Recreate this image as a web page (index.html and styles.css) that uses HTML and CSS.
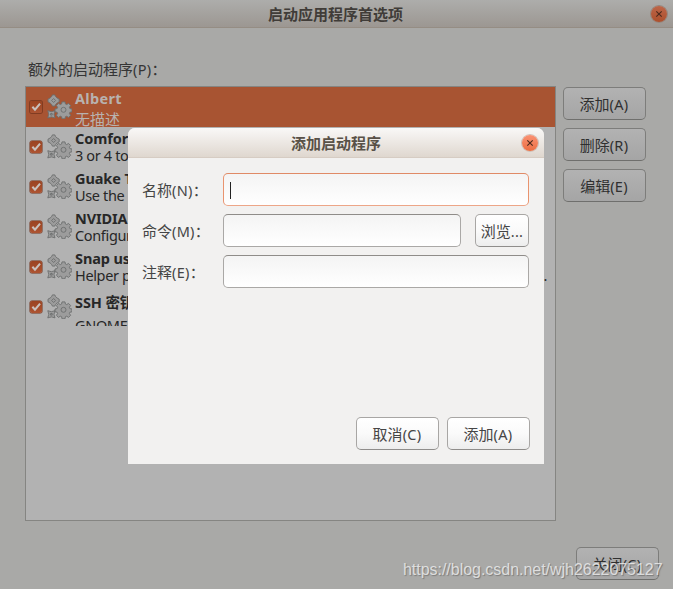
FILE: index.html
```html
<!DOCTYPE html>
<html lang="zh-CN">
<head>
<meta charset="utf-8">
<title>启动应用程序首选项</title>
<link rel="stylesheet" href="styles.css">
</head>
<body>
<svg class="defs" width="0" height="0" aria-hidden="true">
  <defs>
    <g id="gears">
      <g transform="translate(6.6 6.5)">
        <path d="M-1.2 -5.6h2.4l.7 1.6 1.6 1.5 2.1 1.2v2.6l-2.1 1.2-1.6 1.5-.7 1.6h-2.4l-.7-1.6-1.6-1.5-2.1-1.2v-2.6l2.1-1.2 1.6-1.5z"/>
        <path class="hole" d="M0 -2L2 0 0 2-2 0z"/>
      </g>
      <g transform="translate(4.4 20.3)">
        <path d="M-3.6 -3.6l2.1 .6 1.5 .4 1.5-.4 2.1-.6-.6 2.1-.4 1.5.4 1.5.6 2.1-2.1-.6L0 2.6l-1.5.4-2.1.6.6-2.1.4-1.5-.4-1.5z"/>
        <path class="hole" d="M-.8 -.8h1.6v1.6h-1.6z"/>
      </g>
      <g transform="translate(16.5 15.4)">
        <path d="M-1.5 -7.5h3l.4 2.1 1.3.6 1.8-1.2 2.1 2.1-1.2 1.8.5 1.3 2.1.4v2.8l-2.1.4-.5 1.3 1.2 1.8-2.1 2.1-1.8-1.2-1.3.5-.4 2.1h-3l-.4-2.1-1.3-.5-1.8 1.2-2.1-2.1 1.2-1.8-.5-1.3-2.1-.4v-2.8l2.1-.4.5-1.3-1.2-1.8 2.1-2.1 1.8 1.2 1.3-.6z"/>
        <circle class="hole" cx="0" cy=".4" r="2.5"/>
      </g>
    </g>
    <path id="tick" d="M2.6 6.2L5.4 9.4 10.9 2.8"/>
  </defs>
</svg>
<div class="window">
  <header class="titlebar">
    <h1>启动应用程序首选项</h1>
    <span class="close"><svg viewBox="0 0 8 8"><path d="M1.3 1.3l5.4 5.4M6.7 1.3L1.3 6.7"/></svg></span>
  </header>
  <main class="content">
    <p class="heading">额外的启动程序<span class="lat">(P)</span>：</p>
    <div class="columns">
      <ul class="list">
        <li class="row selected">
          <span class="check"><svg viewBox="0 0 13 13"><use href="#tick"/></svg></span>
          <svg class="gears" viewBox="0 0 25 25"><use href="#gears"/></svg>
          <div class="texts"><b>Albert</b><span>无描述</span></div>
        </li>
        <li class="row">
          <span class="check"><svg viewBox="0 0 13 13"><use href="#tick"/></svg></span>
          <svg class="gears" viewBox="0 0 25 25"><use href="#gears"/></svg>
          <div class="texts"><b>Comfor</b><span>3 or 4 to</span></div>
        </li>
        <li class="row">
          <span class="check"><svg viewBox="0 0 13 13"><use href="#tick"/></svg></span>
          <svg class="gears" viewBox="0 0 25 25"><use href="#gears"/></svg>
          <div class="texts"><b>Guake T</b><span>Use the</span></div>
        </li>
        <li class="row">
          <span class="check"><svg viewBox="0 0 13 13"><use href="#tick"/></svg></span>
          <svg class="gears" viewBox="0 0 25 25"><use href="#gears"/></svg>
          <div class="texts"><b>NVIDIA</b><span>Configur</span></div>
        </li>
        <li class="row">
          <span class="check"><svg viewBox="0 0 13 13"><use href="#tick"/></svg></span>
          <svg class="gears" viewBox="0 0 25 25"><use href="#gears"/></svg>
          <div class="texts"><b>Snap us</b><span class="spread"><span>Helper p</span><span>.</span></span></div>
        </li>
        <li class="row last">
          <span class="check"><svg viewBox="0 0 13 13"><use href="#tick"/></svg></span>
          <svg class="gears" viewBox="0 0 25 25"><use href="#gears"/></svg>
          <div class="texts"><b>SSH 密钥</b><span>GNOME</span></div>
        </li>
      </ul>
      <div class="actions">
        <button class="btn dim">添加<span class="lat">(A)</span></button>
        <button class="btn dim">删除<span class="lat">(R)</span></button>
        <button class="btn dim">编辑<span class="lat">(E)</span></button>
      </div>
    </div>
    <footer class="footer"><button class="btn dim">关闭<span class="lat">(C)</span></button></footer>
  </main>
</div>

<section class="dialog">
  <header class="titlebar light">
    <h2>添加启动程序</h2>
    <span class="close bright"><svg viewBox="0 0 8 8"><path d="M1.3 1.3l5.4 5.4M6.7 1.3L1.3 6.7"/></svg></span>
  </header>
  <div class="form">
    <div class="field"><label>名称<span class="lat">(N)</span>：</label><div class="entry focused"><i class="caret"></i></div></div>
    <div class="field"><label>命令<span class="lat">(M)</span>：</label><div class="entry"></div><button class="btn browse">浏览<span class="lat">...</span></button></div>
    <div class="field"><label>注释<span class="lat">(E)</span>：</label><div class="entry"></div></div>
  </div>
  <div class="buttons">
    <button class="btn">取消<span class="lat">(C)</span></button>
    <button class="btn">添加<span class="lat">(A)</span></button>
  </div>
</section>
<div class="watermark">https://blog.csdn.net/wjh2622075127</div>
</body>
</html>
```
FILE: styles.css
```css
* { box-sizing: border-box; }
body {
  margin: 0;
  width: 673px;
  height: 589px;
  overflow: hidden;
  position: relative;
  background: #a9a9a7;
  color: #353535;
  font: 15px/20px "Noto Sans", "Noto Sans CJK SC", sans-serif;
}
.defs { position: absolute; }
h1, h2, p, ul { margin: 0; padding: 0; }
.lat { font-size: 14.5px; letter-spacing: .3px; }
.window { height: 589px; display: flex; flex-direction: column; }
.titlebar {
  height: 28px;
  flex: none;
  display: flex;
  align-items: center;
  padding-right: 6px;
  background: linear-gradient(#adadab, #9c9792);
  border-bottom: 1px solid #958d84;
}
.titlebar h1, .titlebar h2 {
  flex: 1;
  padding-left: 20px;
  text-align: center;
  font-size: 15px;
  line-height: 20px;
  font-weight: 700;
  color: #403c38;
}
.close {
  width: 16px;
  height: 16px;
  border-radius: 50%;
  background: linear-gradient(#bd6649, #ac4f2c);
  box-shadow: 0 0 0 1px #96867d;
  display: flex;
  align-items: center;
  justify-content: center;
}
.close svg { width: 8px; height: 8px; fill: none; stroke: #4b2a1d; stroke-width: 1.1; }
.content { flex: 1; display: flex; flex-direction: column; padding: 31px 14px 0 25px; }
.heading { height: 27px; padding-left: 3px; }
.columns { display: flex; gap: 7px; }
.list {
  list-style: none;
  width: 531px;
  height: 435px;
  border: 1px solid #858582;
  background: #b2b2b2;
}
.row { height: 40px; display: flex; align-items: flex-start; padding-left: 4px; overflow: hidden; color: #272727; }
.row.last { height: 39px; }
.selected { background: #a85432; color: #b8b2af; }
.check {
  width: 12px;
  height: 12px;
  margin-top: 14px;
  border-radius: 2px;
  background: linear-gradient(#9a4321, #ad5432);
  box-shadow: 0 0 0 .5px #713018;
  display: flex;
}
.selected .check { box-shadow: 0 0 0 1px #813c22; }
.check svg { width: 12px; height: 12px; fill: none; stroke: #c9c1bd; stroke-width: 2.2; }
.gears { width: 25px; height: 25px; margin: 7px 0 0 5px; fill: #9c9c9c; stroke: #6c6e6e; stroke-width: .9; flex: none; }
.gears .hole { fill: #b0b0b0; }
.selected .gears .hole { fill: #a85432; }
.texts { flex: 1; margin-left: 3px; display: flex; flex-direction: column; font-size: 14.5px; white-space: nowrap; }
.texts b { height: 17px; line-height: 22px; letter-spacing: -.1px; }
.selected .texts b { letter-spacing: .3px; }
.texts > span { height: 24px; line-height: 23px; letter-spacing: -.35px; }
.selected .texts > span { line-height: 31px; font-size: 15px; letter-spacing: 0; }
.last .texts b { height: 20px; line-height: 31px; }
.last .texts > span { line-height: 37px; }
.spread { display: flex; justify-content: space-between; padding-right: 8px; }
.actions { display: flex; flex-direction: column; gap: 8px; padding-top: 1px; }
.btn {
  width: 83px;
  height: 33px;
  padding: 1px 1px 0 0;
  border: 1px solid #a8a6a4;
  border-bottom-color: #8f8d8b;
  border-radius: 5px;
  background: linear-gradient(#fff, #fafafa 50%, #ededed);
  color: #454545;
  font: inherit;
}
.btn.dim {
  border-color: #7d7d7b;
  border-bottom-color: #6f6f6d;
  background: linear-gradient(#b2b2b2, #a5a5a5);
  color: #303030;
}
.footer { display: flex; justify-content: flex-end; padding-top: 26px; }
.dialog {
  position: absolute;
  left: 128px;
  top: 128px;
  width: 416px;
  height: 336px;
  display: flex;
  flex-direction: column;
  background: #f2f1f0;
  border-radius: 7px 7px 0 0;
  color: #454545;
}
.titlebar.light {
  height: 30px;
  border-radius: 7px 7px 0 0;
  background: linear-gradient(#f9f8f7, #dfd7cf);
  border-bottom-color: #d6ccc3;
}
.titlebar.light h2 { padding-left: 22px; color: #595147; }
.close.bright { background: linear-gradient(#fa9273, #ec6e42); box-shadow: 0 0 0 1px #cfbfb6; }
.form { flex: 1; padding: 15px 15px 0 14px; display: flex; flex-direction: column; gap: 8px; }
.field { display: flex; height: 33px; }
.field label { width: 81px; line-height: 34px; white-space: nowrap; }
.entry {
  flex: 1;
  border: 1px solid #aaa8a6;
  border-top-color: #8f8c89;
  border-radius: 5px;
  background: linear-gradient(#f4f4f4, #fff);
}
.entry.focused { border-color: #e08a66 #e9946f #eda688; }
.caret { display: block; width: 1px; height: 17px; margin: 8px 0 0 6px; background: #222; }
.browse { width: 54px; margin-left: 14px; padding: 1px 0 0; }
.buttons { display: flex; justify-content: flex-end; gap: 8px; padding: 0 14px 14px 0; }
.watermark {
  position: absolute;
  left: 403px;
  top: 560px;
  font: 16px/20px "Liberation Sans", Arial, sans-serif;
  letter-spacing: -.03px;
  color: rgba(235, 235, 235, .85);
  text-shadow: 1px 1px 1px rgba(80, 80, 80, .5);
}
```
